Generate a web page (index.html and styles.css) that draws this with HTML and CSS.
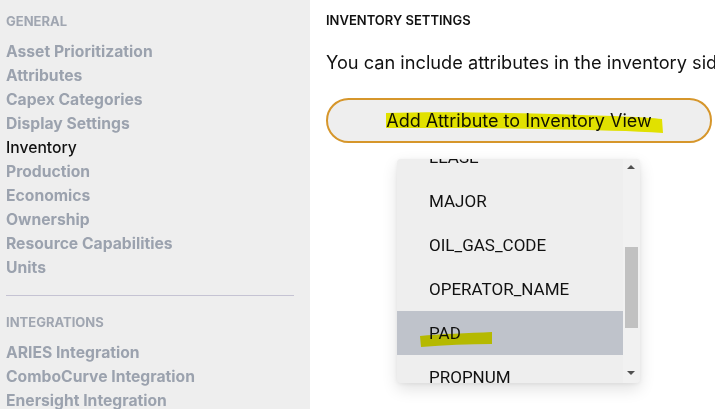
FILE: index.html
```html
<!DOCTYPE html>
<html>
<head>
<meta charset="utf-8">
<link rel="stylesheet" href="styles.css">
</head>
<body>
<div class="app">
  <aside class="sidebar">
    <div class="group-title">GENERAL</div>
    <nav class="nav">
      <a class="nav-item">Asset Prioritization</a>
      <a class="nav-item">Attributes</a>
      <a class="nav-item">Capex Categories</a>
      <a class="nav-item">Display Settings</a>
      <a class="nav-item active">Inventory</a>
      <a class="nav-item">Production</a>
      <a class="nav-item">Economics</a>
      <a class="nav-item">Ownership</a>
      <a class="nav-item">Resource Capabilities</a>
      <a class="nav-item">Units</a>
    </nav>
    <hr class="divider">
    <div class="group-title">INTEGRATIONS</div>
    <nav class="nav">
      <a class="nav-item">ARIES Integration</a>
      <a class="nav-item">ComboCurve Integration</a>
      <a class="nav-item">Enersight Integration</a>
    </nav>
  </aside>
  <main class="main">
    <h2 class="title">INVENTORY SETTINGS</h2>
    <p class="desc">You can include attributes in the inventory sidebar to show them for each well.</p>
    <button class="add-btn">Add Attribute to Inventory View</button>
  </main>
</div>

<div class="dropdown">
  <ul class="options">
    <li class="option">LEASE</li>
    <li class="option">MAJOR</li>
    <li class="option">OIL_GAS_CODE</li>
    <li class="option">OPERATOR_NAME</li>
    <li class="option selected">PAD</li>
    <li class="option">PROPNUM</li>
  </ul>
  <div class="scrollbar">
    <span class="arrow up"></span>
    <span class="thumb"></span>
    <span class="arrow down"></span>
  </div>
</div>

<svg class="marker marker-btn" width="290" height="30" viewBox="0 0 290 30">
  <path d="M2 4 C60 2 150 4 230 7 C255 8 270 9 278 10 L279 24 C250 22 210 21 160 20 C100 19 50 19 2 19 Z" fill="#f2f200"/>
</svg>
<svg class="marker marker-pad" width="80" height="18" viewBox="0 0 80 18">
  <path d="M1 6 C20 4 50 3 73 2 L73 14 C50 14 25 15 2 17 Z" fill="#f2f200"/>
</svg>
</body>
</html>
```

FILE: styles.css
```css
* { box-sizing: border-box; }
html, body { margin: 0; padding: 0; }
body {
  width: 715px;
  height: 409px;
  overflow: hidden;
  background: #ffffff;
  font-family: Inter, "Noto Sans", sans-serif;
  position: relative;
}
.app {
  display: flex;
  height: 409px;
}
.sidebar {
  width: 310px;
  flex: none;
  background: #eeeeee;
  padding: 12px 16px 0 6px;
}
.group-title {
  font-size: 13px;
  font-weight: 700;
  color: #a0a6b1;
  line-height: 18px;
  margin-bottom: 10px;
}
.nav {
  display: flex;
  flex-direction: column;
}
.nav-item {
  font-size: 15.7px;
  font-weight: 700;
  color: #9ba2ae;
  line-height: 24px;
}
.nav-item.active {
  color: #111111;
  font-weight: 500;
}
.divider {
  border: none;
  border-top: 1px solid #c5c3d3;
  margin: 15px 0 17px 0;
}
.main {
  flex: 1;
  padding: 11px 0 0 16px;
  overflow: hidden;
  white-space: nowrap;
}
.title {
  margin: 0;
  font-size: 13px;
  font-weight: 600;
  color: #111111;
  line-height: 18px;
}
.desc {
  margin: 21px 0 0 0;
  font-size: 18.2px;
  color: #111111;
  line-height: 24px;
}
.add-btn {
  display: block;
  margin-top: 24px;
  width: 386px;
  height: 45px;
  border: 2px solid #d6962b;
  border-radius: 23px;
  background: #eeeeee;
  font-family: Inter, "Noto Sans", sans-serif;
  font-size: 18px;
  color: #111111;
  padding: 0;
}
.dropdown {
  position: absolute;
  left: 397px;
  top: 159px;
  width: 243px;
  height: 224px;
  background: #eeeeee;
  border-radius: 4px;
  overflow: hidden;
  box-shadow: 0 6px 16px rgba(0, 0, 0, 0.12), 0 1px 4px rgba(0,0,0,0.06);
  display: flex;
}
.options {
  list-style: none;
  margin: -24px 0 0 0;
  padding: 0;
  flex: 1;
}
.option {
  height: 44px;
  display: flex;
  align-items: center;
  padding-left: 32px;
  font-family: Roboto, "Liberation Sans", sans-serif;
  font-size: 17px;
  color: #111111;
}
.option.selected {
  background: #bfc3cb;
}
.scrollbar {
  width: 17px;
  flex: none;
  background: #f1f1f1;
  position: relative;
}
.thumb {
  position: absolute;
  left: 2px;
  top: 88px;
  width: 13px;
  height: 81px;
  background: #c1c1c1;
}
.arrow {
  position: absolute;
  left: 4px;
  width: 0;
  height: 0;
  border-left: 4px solid transparent;
  border-right: 4px solid transparent;
}
.arrow.up {
  top: 6px;
  border-bottom: 4px solid #505050;
}
.arrow.down {
  top: 212px;
  border-top: 4px solid #505050;
}
.marker {
  position: absolute;
  mix-blend-mode: multiply;
  pointer-events: none;
}
.marker-btn {
  left: 384px;
  top: 109px;
}
.marker-pad {
  left: 419px;
  top: 330px;
}
```
